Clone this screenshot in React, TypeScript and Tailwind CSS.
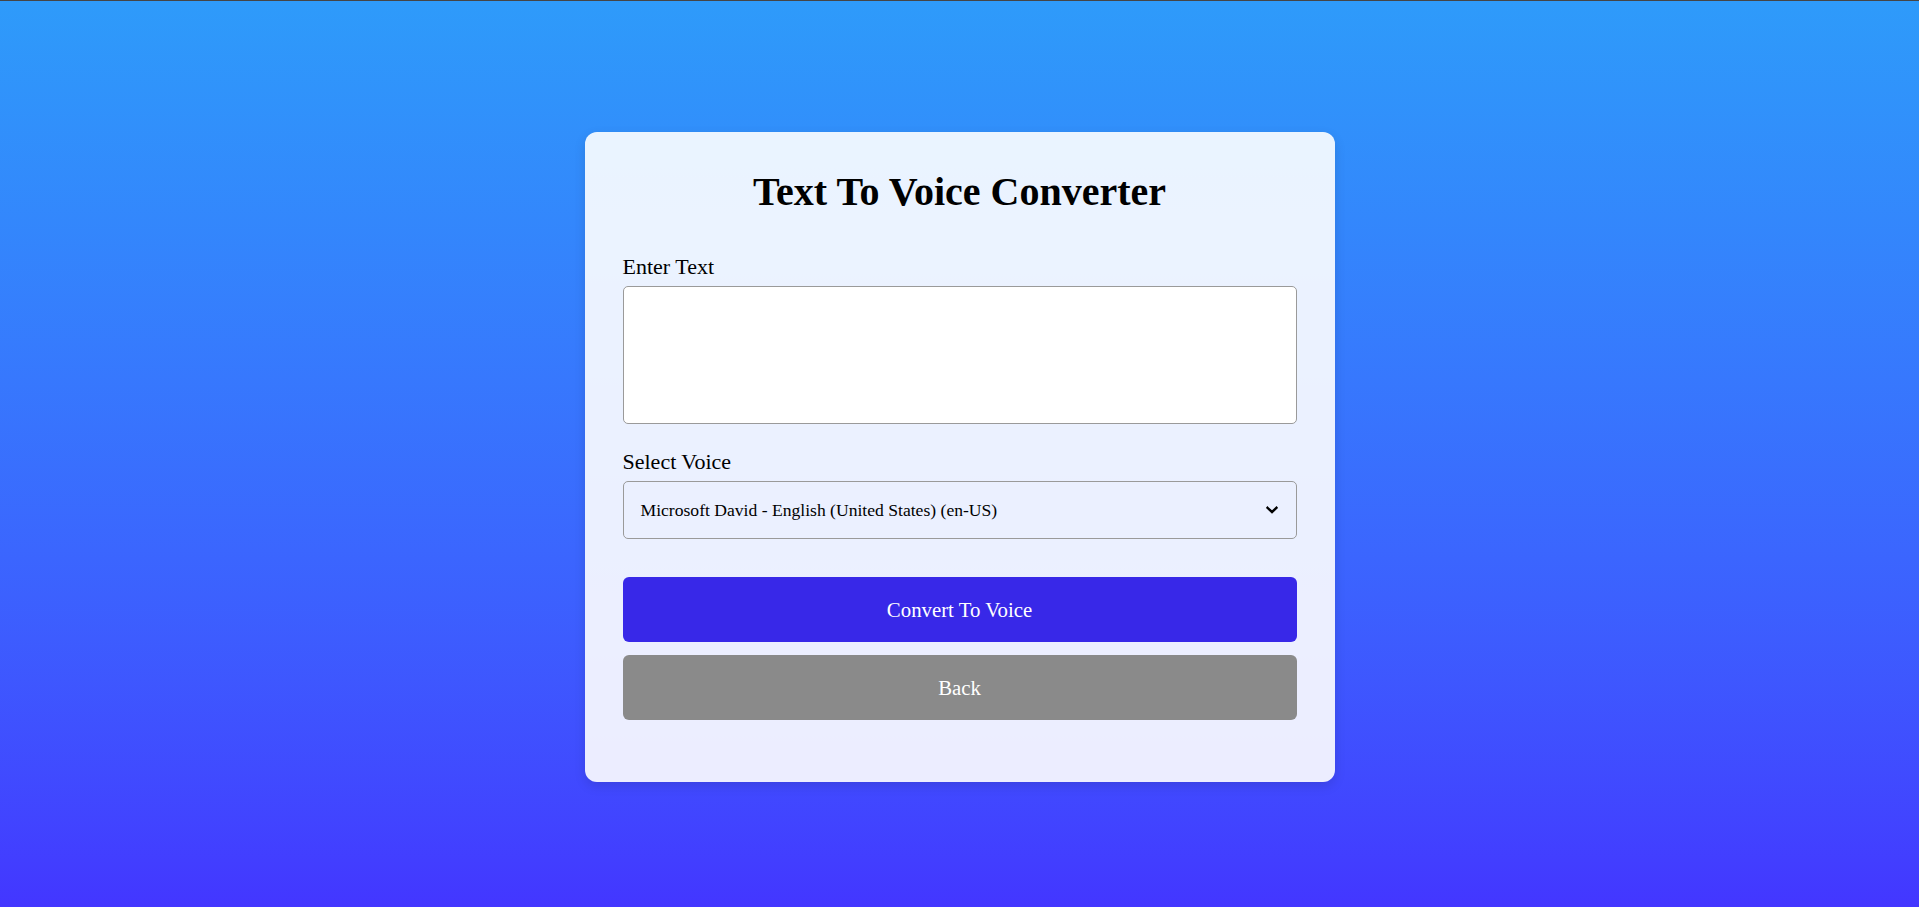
import React from "react";

export default function App() {
  return (
    <div
      className="min-h-screen w-full bg-gradient-to-b from-[#2e9bfa] to-[#4336ff] flex flex-col items-center"
      style={{ fontFamily: '"Liberation Serif", "Times New Roman", serif' }}
    >
      <div className="w-full h-px bg-[#454545]" />
      <div className="mt-[131px] w-[750px] rounded-[12px] bg-white/90 shadow-[0_4px_12px_rgba(0,0,0,0.12)] px-[38px] pt-[38px] pb-[62px] flex flex-col">
        <h1 className="text-[40px] leading-[44px] font-bold text-black text-center">
          Text To Voice Converter
        </h1>
        <label className="mt-[40px] text-[22px] leading-[25px] text-black">Enter Text</label>
        <textarea className="mt-[7px] h-[138px] w-full resize-none rounded-[5px] border border-[#9a9a9a] bg-white outline-none" />
        <label className="mt-[25px] text-[22px] leading-[25px] text-black">Select Voice</label>
        <div className="relative mt-[7px] h-[58px] w-full rounded-[5px] border border-[#9a9a9a] flex items-center pl-[17px]">
          <span className="text-[17.6px] text-black">
            Microsoft David - English (United States) (en-US)
          </span>
          <svg
            className="absolute right-[18px] top-1/2 -translate-y-1/2"
            width="12"
            height="8"
            viewBox="0 0 12 8"
            fill="none"
          >
            <path d="M1.5 1.8 L6 6 L10.5 1.8" stroke="#000" strokeWidth="2.4" strokeLinecap="square" />
          </svg>
        </div>
        <button className="mt-[38px] h-[65px] w-full rounded-[6px] bg-[#3828e8] text-white text-[20.8px] flex items-center justify-center">
          Convert To Voice
        </button>
        <button className="mt-[13px] h-[65px] w-full rounded-[6px] bg-[#8a8a8a] text-white text-[20.8px] flex items-center justify-center">
          Back
        </button>
      </div>
    </div>
  );
}
